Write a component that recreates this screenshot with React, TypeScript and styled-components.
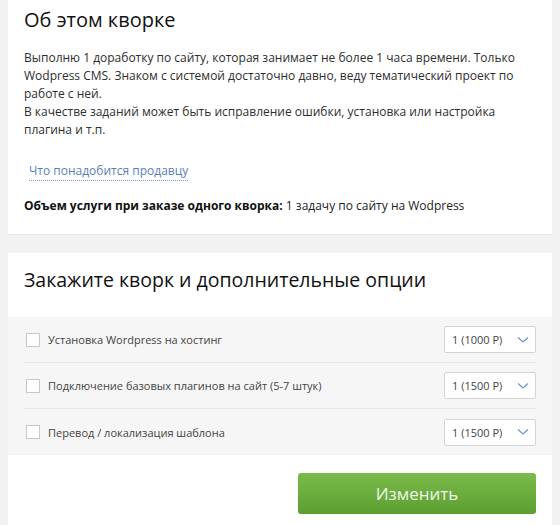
import React from "react";
import styled, { createGlobalStyle } from "styled-components";

const Global = createGlobalStyle`
  html, body { margin: 0; padding: 0; background: #f2f2f2; }
  body { font-family: "Open Sans", "Noto Sans", sans-serif; color: #333; }
  * { box-sizing: border-box; }
`;

const Page = styled.div`
  width: 560px;
  height: 525px;
  overflow: hidden;
  padding: 0 8px;
  display: flex;
  flex-direction: column;
  gap: 19px;
`;

const Card = styled.section<{ $pad: string }>`
  background: #fff;
  padding: ${(p) => p.$pad};
  box-shadow: 0 1px 1px rgba(0, 0, 0, 0.04);
`;

const Title = styled.h2<{ $size: number }>`
  margin: 0;
  font-weight: 400;
  font-size: ${(p) => p.$size}px;
  line-height: 1.3;
  color: #111;
  padding: 0 16px;
`;

const Text = styled.p`
  margin: 16px 0 0;
  padding: 0 16px;
  font-size: 12px;
  line-height: 18px;
  color: #2e2e2e;
`;

const LinkRow = styled.div`
  margin-top: 21px;
  padding: 0 21px;
  line-height: 18px;
`;

const DottedLink = styled.a`
  font-size: 12px;
  line-height: 18px;
  color: #5b7fb8;
  text-decoration: none;
  border-bottom: 1px dotted #7f9bc8;
  padding-bottom: 1px;
`;

const Volume = styled.div`
  margin-top: 17px;
  padding: 0 16px;
  font-size: 12px;
  line-height: 18px;
  color: #222;
  b { font-weight: 700; color: #111; }
`;

const Options = styled.div`
  margin-top: 25px;
  background: #f6f6f6;
  padding: 0 16px;
`;

const Row = styled.div`
  height: 46px;
  display: flex;
  align-items: center;
  border-bottom: 1px solid #e8e8e8;
  &:last-child { border-bottom: none; }
`;

const Check = styled.span`
  width: 14px;
  height: 14px;
  border: 1px solid #c8c8c8;
  background: #fff;
  margin-left: 2px;
  flex-shrink: 0;
`;

const Label = styled.span`
  margin-left: 8px;
  font-size: 11px;
  color: #444;
  flex: 1;
`;

const Select = styled.div`
  width: 92px;
  height: 27px;
  border: 1px solid #d4d4d4;
  border-radius: 2px;
  background: #fff;
  display: flex;
  align-items: center;
  justify-content: space-between;
  padding: 0 6px 0 7px;
  font-size: 11px;
  color: #444;
`;

const Actions = styled.div`
  display: flex;
  justify-content: flex-end;
  padding: 18px 16px 0;
`;

const Button = styled.button`
  width: 238px;
  height: 41px;
  border: none;
  border-radius: 3px;
  background: linear-gradient(#7cbb4c, #5b9e30);
  color: #eef7e6;
  font-family: "Open Sans", sans-serif;
  font-size: 17px;
  cursor: pointer;
`;

const Chevron = () => (
  <svg width="12" height="8" viewBox="0 0 12 8">
    <path d="M1 1.5 L6 6 L11 1.5" fill="none" stroke="#6b9bc9" strokeWidth="1.3" />
  </svg>
);

const options = [
  { label: "Установка Wordpress на хостинг", price: "1 (1000 Р)" },
  { label: "Подключение базовых плагинов на сайт (5-7 штук)", price: "1 (1500 Р)" },
  { label: "Перевод / локализация шаблона", price: "1 (1500 Р)" },
];

export default function App() {
  return (
    <>
      <Global />
      <Page>
        <Card $pad="7px 0 19px">
          <Title $size={20}>Об этом кворке</Title>
          <Text>
            Выполню 1 доработку по сайту, которая занимает не более 1 часа времени. Только
            Wodpress CMS. Знаком с системой достаточно давно, веду тематический проект по
            работе с ней.
            <br />
            В качестве заданий может быть исправление ошибки, установка или настройка
            плагина и т.п.
          </Text>
          <LinkRow>
            <DottedLink href="#">Что понадобится продавцу</DottedLink>
          </LinkRow>
          <Volume>
            <b>Объем услуги при заказе одного кворка:</b> 1 задачу по сайту на Wodpress
          </Volume>
        </Card>
        <Card $pad="14px 0 20px">
          <Title $size={19.5}>Закажите кворк и дополнительные опции</Title>
          <Options>
            {options.map((o) => (
              <Row key={o.label}>
                <Check />
                <Label>{o.label}</Label>
                <Select>
                  <span>{o.price}</span>
                  <Chevron />
                </Select>
              </Row>
            ))}
          </Options>
          <Actions>
            <Button>Изменить</Button>
          </Actions>
        </Card>
      </Page>
    </>
  );
}
